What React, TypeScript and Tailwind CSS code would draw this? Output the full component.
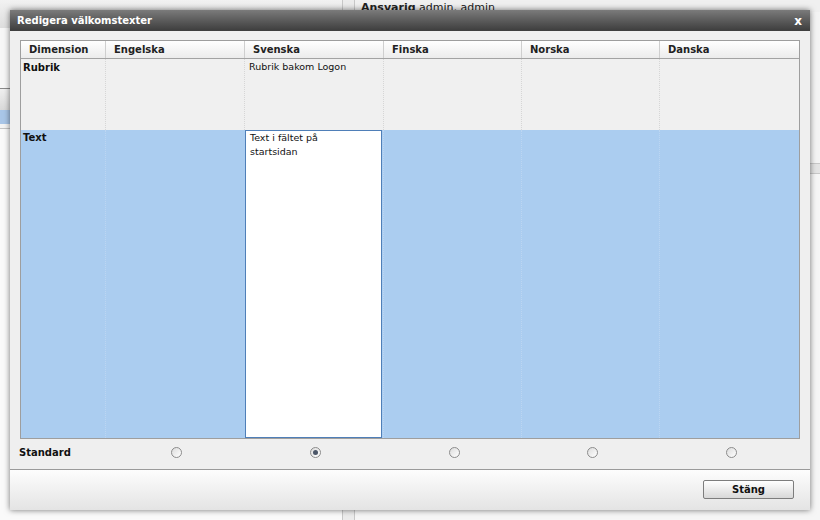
import React, { useState } from 'react'

const languages = ['Engelska', 'Svenska', 'Finska', 'Norska', 'Danska']
const cols = 'grid grid-cols-[84px_139px_139px_138px_138px_140px]'

const Radio: React.FC<{ checked: boolean; onClick: () => void }> = ({ checked, onClick }) => (
  <button
    onClick={onClick}
    className="w-[11px] h-[11px] rounded-full border border-[#8c8c8c] bg-gradient-to-br from-[#dcdcdc] to-[#ffffff] flex items-center justify-center"
  >
    {checked && <span className="w-[5px] h-[5px] rounded-full bg-[#4b5668]" />}
  </button>
)

const App: React.FC = () => {
  const [standard, setStandard] = useState(1)
  const [text, setText] = useState('Text i fältet på\nstartsidan')

  return (
    <div className="relative w-[820px] h-[520px] overflow-hidden bg-[#f4f4f4] font-['DejaVu_Sans',sans-serif] text-[10px] text-[#111]">
      {/* page behind the dialog */}
      <div className="flex h-full">
        <div className="w-[343px] border-r border-[#c8c8c8] flex flex-col">
          <div className="h-[28px] bg-gradient-to-b from-[#f2f2f2] to-[#dedede]" />
          <div className="h-[60px] bg-[#f7f7f7]" />
          <div className="h-[22px] border-t border-[#8a8a8a] bg-gradient-to-b from-[#f0f0f0] to-[#d9d9d9]" />
          <div className="h-[14px] bg-[#a9c6e8]" />
          <div className="h-[5px] border-b border-[#c4c4c4]" />
          <div className="flex-1 bg-[#fafafa]" />
        </div>
        <div className="w-[12px] border-r border-[#c8c8c8] bg-[#ececec]" />
        <div className="flex-1 flex flex-col">
          <div className="h-[12px] pl-[6px] text-[11px] leading-[16px] text-[#222] bg-[#f0f0f0]">
            <span className="font-bold">Ansvarig</span> admin, admin
          </div>
          <div className="h-[151px]" />
          <div className="h-[11px] border-y border-[#c8c8c8] bg-[#e4e4e4]" />
          <div className="flex-1 bg-[#f6f6f6]" />
        </div>
      </div>

      {/* dialog */}
      <div className="absolute left-[10px] top-[10px] w-[800px] h-[500px] flex flex-col bg-[#efefef] shadow-[0_0_6px_rgba(0,0,0,0.55)]">
        <div className="h-[21px] flex items-center justify-between px-[7px] bg-gradient-to-b from-[#7b7b7b] to-[#3d3d3d] text-white font-bold">
          <span>Redigera välkomstexter</span>
          <button className="text-[12px] leading-none pr-[1px]">x</button>
        </div>

        <div className="px-[10px] pt-[9px]">
          <div className="w-[780px] border border-[#9e9e9e]">
            <div className={`${cols} h-[18px] border-b border-[#a3a3a3] bg-gradient-to-b from-[#ffffff] to-[#ececec] font-bold text-[#222]`}>
              <div className="pl-[8px] flex items-center">Dimension</div>
              {languages.map((l) => (
                <div key={l} className="pl-[8px] flex items-center border-l border-[#cfcfcf]">
                  {l}
                </div>
              ))}
            </div>

            <div className={`${cols} h-[71px] bg-[#f0f0f0]`}>
              <div className="pl-[2px] pt-[1px] font-bold">Rubrik</div>
              {languages.map((l) => (
                <div key={l} className="pl-[4px] pt-[1px] border-l border-dotted border-[#d6d6d6] text-[9.5px]">
                  {l === 'Svenska' ? 'Rubrik bakom Logon' : ''}
                </div>
              ))}
            </div>

            <div className={`${cols} h-[308px] bg-[#abcdf0]`}>
              <div className="pl-[2px] font-bold">Text</div>
              {languages.map((l) =>
                l === 'Svenska' ? (
                  <div key={l} className="pl-[1px] pr-[1px]">
                    <textarea
                      value={text}
                      onChange={(e) => setText(e.target.value)}
                      className="w-full h-full resize-none bg-white border border-[#4f7fb8] px-[4px] pt-0 text-[9.5px] leading-[14px] font-['DejaVu_Sans',sans-serif] text-[#111] outline-none"
                    />
                  </div>
                ) : (
                  <div key={l} className="border-l border-dotted border-[#bcd6f2]" />
                )
              )}
            </div>
          </div>

          <div className={`${cols} h-[30px] items-start pt-[8px]`}>
            <div className="font-bold -ml-[1px] leading-[12px]">Standard</div>
            {languages.map((l, i) => (
              <div key={l} className="flex justify-center pl-[6px]">
                <Radio checked={standard === i} onClick={() => setStandard(i)} />
              </div>
            ))}
          </div>
        </div>

        <div className="flex-1 border-t border-[#9a9a9a] bg-gradient-to-b from-[#fdfdfd] to-[#e4e4e4] flex justify-end items-start pt-[10px] pr-[16px]">
          <button className="w-[91px] h-[19px] border border-[#7d7d7d] rounded-[2px] bg-gradient-to-b from-[#ffffff] to-[#d8d8d8] font-bold text-[#111]">
            Stäng
          </button>
        </div>
      </div>
    </div>
  )
}

export default App
